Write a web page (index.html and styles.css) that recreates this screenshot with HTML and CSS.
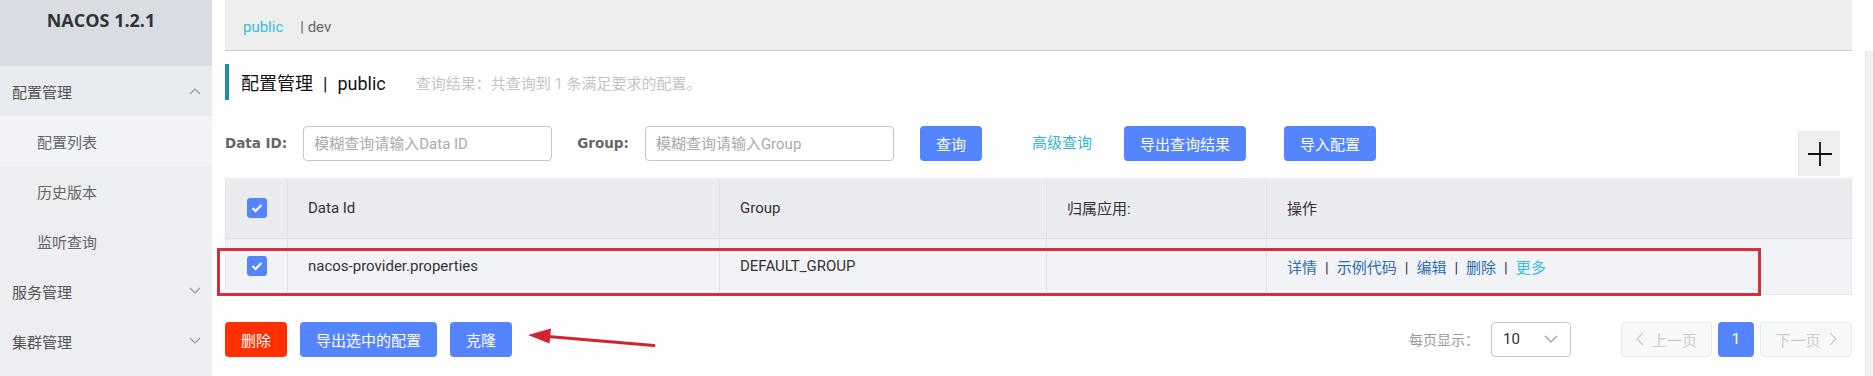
FILE: index.html
```html
<!DOCTYPE html>
<html>
<head>
    <title>Nacos - 配置管理</title>
    <link rel="stylesheet" href="styles.css">
</head>
<body>
    <div class="layout">
        <aside class="sidebar">
            <div class="logo">NACOS 1.2.1</div>
            <ul class="menu">
                <li class="menu-item">
                    <span>配置管理</span>
                    <svg class="chevron" width="12" height="8" viewBox="0 0 12 8"><polyline points="1,7 6,2 11,7" fill="none" stroke="#999" stroke-width="1.2"/></svg>
                </li>
                <li class="sub-item active">配置列表</li>
                <li class="sub-item">历史版本</li>
                <li class="sub-item">监听查询</li>
                <li class="menu-item">
                    <span>服务管理</span>
                    <svg class="chevron" width="12" height="8" viewBox="0 0 12 8"><polyline points="1,1 6,6 11,1" fill="none" stroke="#999" stroke-width="1.2"/></svg>
                </li>
                <li class="menu-item">
                    <span>集群管理</span>
                    <svg class="chevron" width="12" height="8" viewBox="0 0 12 8"><polyline points="1,1 6,6 11,1" fill="none" stroke="#999" stroke-width="1.2"/></svg>
                </li>
            </ul>
        </aside>

        <main class="main">
            <div class="page">
                <div class="ns-bar">
                    <span class="ns ns-active">public</span>
                    <span class="ns">| dev</span>
                </div>

                <div class="title-bar">
                    <span class="title">配置管理<span class="title-sep">|</span>public</span>
                    <span class="query-info">查询结果：共查询到 1 条满足要求的配置。</span>
                </div>

                <div class="search-row">
                    <label class="field-label">Data ID:</label>
                    <input class="field-input" type="text" placeholder="模糊查询请输入Data ID">
                    <label class="field-label group-label">Group:</label>
                    <input class="field-input" type="text" placeholder="模糊查询请输入Group">
                    <button class="btn btn-primary btn-query">查询</button>
                    <span class="link-advanced">高级查询</span>
                    <button class="btn btn-primary btn-export">导出查询结果</button>
                    <button class="btn btn-primary btn-import">导入配置</button>
                    <button class="btn-add">
                        <svg width="26" height="26" viewBox="0 0 26 26"><path d="M13 1v24M1 13h24" stroke="#111" stroke-width="1.8" fill="none"/></svg>
                    </button>
                </div>

                <div class="table-wrap">
                    <table class="config-table">
                        <colgroup>
                            <col style="width:62px">
                            <col style="width:432px">
                            <col style="width:327px">
                            <col style="width:220px">
                            <col>
                        </colgroup>
                        <thead>
                            <tr>
                                <th class="cell-check"><span class="checkbox"><svg width="12" height="10" viewBox="0 0 12 10"><polyline points="1.5,5 4.5,8 10.5,2" fill="none" stroke="#fff" stroke-width="2"/></svg></span></th>
                                <th>Data Id</th>
                                <th>Group</th>
                                <th>归属应用:</th>
                                <th>操作</th>
                            </tr>
                        </thead>
                        <tbody>
                            <tr>
                                <td class="cell-check"><span class="checkbox"><svg width="12" height="10" viewBox="0 0 12 10"><polyline points="1.5,5 4.5,8 10.5,2" fill="none" stroke="#fff" stroke-width="2"/></svg></span></td>
                                <td>nacos-provider.properties</td>
                                <td>DEFAULT_GROUP</td>
                                <td></td>
                                <td class="actions">
                                    <a>详情</a><span class="sep">|</span><a>示例代码</a><span class="sep">|</span><a>编辑</a><span class="sep">|</span><a>删除</a><span class="sep">|</span><a class="more">更多</a>
                                </td>
                            </tr>
                        </tbody>
                    </table>
                    <div class="highlight"></div>
                </div>

                <div class="bottom-bar">
                    <button class="btn btn-danger">删除</button>
                    <button class="btn btn-primary">导出选中的配置</button>
                    <button class="btn btn-primary">克隆</button>
                    <svg class="arrow" width="140" height="28" viewBox="0 0 140 28">
                        <line x1="26" y1="11.5" x2="132" y2="20.5" stroke="#d3232f" stroke-width="3" stroke-linecap="round"/>
                        <polygon points="6,10 29,3.5 27.5,18.5" fill="#d3232f"/>
                    </svg>

                    <div class="pagination">
                        <span class="page-size-label">每页显示：</span>
                        <div class="page-size">
                            <span>10</span>
                            <svg width="14" height="8" viewBox="0 0 14 8"><polyline points="1,1 7,7 13,1" fill="none" stroke="#999" stroke-width="1.2"/></svg>
                        </div>
                        <div class="pager">
                            <span class="pager-btn pager-prev">
                                <svg width="8" height="14" viewBox="0 0 8 14"><polyline points="7,1 1,7 7,13" fill="none" stroke="#ccc" stroke-width="1.4"/></svg>
                                上一页
                            </span>
                            <span class="pager-num">1</span>
                            <span class="pager-btn pager-next">
                                下一页
                                <svg width="8" height="14" viewBox="0 0 8 14"><polyline points="1,1 7,7 1,13" fill="none" stroke="#ccc" stroke-width="1.4"/></svg>
                            </span>
                        </div>
                    </div>
                </div>
            </div>
            <div class="scroll-track"></div>
        </main>
    </div>
</body>
</html>
```

FILE: styles.css
```css
* {
    box-sizing: border-box;
}

body {
    margin: 0;
    font-family: Roboto, "Noto Sans CJK SC", sans-serif;
    font-size: 15px;
    color: #333;
    background: #fff;
}

.layout {
    display: flex;
    height: 100vh;
    overflow: hidden;
}

/* 左侧菜单 */
.sidebar {
    width: 212px;
    flex-shrink: 0;
    background: #eceef1;
}

.logo {
    height: 66px;
    background: #d9dde3;
    font-family: "Open Sans", sans-serif;
    font-weight: 700;
    font-size: 18px;
    color: #333;
    text-align: center;
    padding-top: 8px;
    padding-right: 10px;
}

.menu {
    list-style: none;
    margin: 0;
    padding: 0;
}

.menu-item,
.sub-item {
    height: 50px;
    display: flex;
    align-items: center;
}

.menu-item {
    padding: 0 11px 0 12px;
    justify-content: space-between;
    color: #555;
}

.menu-item:first-child {
    background: #e8ebef;
}

.sub-item {
    padding-left: 37px;
    color: #666;
}

.sub-item.active {
    background: #f1f3f6;
}

/* 主体 */
.main {
    flex: 1;
    display: flex;
    min-width: 0;
}

.page {
    flex: 1;
    padding: 0 13px;
    min-width: 0;
}

.scroll-track {
    width: 8px;
    background: #f1f1f1;
    border-left: 1px solid #e4e4e4;
    margin-top: 51px;
}

.ns-bar {
    height: 51px;
    background: #eee;
    border-bottom: 1px solid #ccc;
    display: flex;
    align-items: center;
    padding: 4px 0 0 18px;
}

.ns {
    color: #666;
    margin-right: 17px;
}

.ns-active {
    color: #33bfd9;
}

.title-bar {
    margin-top: 13px;
    height: 36px;
    border-left: 4px solid #1b8ea3;
    display: flex;
    align-items: center;
    padding-left: 12px;
}

.title {
    font-size: 18px;
    color: #111;
}

.title-sep {
    margin: 0 10px;
}

.query-info {
    margin-left: 30px;
    font-size: 15px;
    color: #c4c4c4;
}

/* 搜索栏 */
.search-row {
    display: flex;
    align-items: flex-start;
    margin-top: 26px;
}

.field-label {
    font-family: "DejaVu Sans", sans-serif;
    font-weight: 700;
    font-size: 13.5px;
    color: #666;
    line-height: 35px;
    margin-right: 16px;
}

.group-label {
    margin-left: 25px;
}

.field-input {
    width: 249px;
    height: 35px;
    border: 1px solid #c4c6cf;
    border-radius: 4px;
    padding: 0 10px;
    font-family: Roboto, "Noto Sans CJK SC", sans-serif;
    font-size: 15px;
    color: #333;
}

.field-input::placeholder {
    color: #aaa;
}

.btn {
    height: 35px;
    padding: 0 16px;
    border: none;
    border-radius: 4px;
    font-family: Roboto, "Noto Sans CJK SC", sans-serif;
    font-size: 15px;
    color: #fff;
    cursor: pointer;
}

.btn-primary {
    background: #5584ff;
}

.btn-danger {
    background: #ff3000;
}

.btn-query {
    margin-left: 26px;
}

.link-advanced {
    margin-left: 50px;
    line-height: 35px;
    color: #33b8d0;
}

.btn-export {
    margin-left: 32px;
}

.btn-import {
    margin-left: 38px;
}

.btn-add {
    margin-left: auto;
    margin-top: 5px;
    margin-right: 12px;
    width: 42px;
    height: 45px;
    background: #efefef;
    border: none;
    border-left: 1px solid #e3e3e3;
    display: flex;
    align-items: center;
    justify-content: center;
    padding: 0;
}

/* 表格 */
.table-wrap {
    position: relative;
    margin-top: 2px;
}

.config-table {
    width: 100%;
    border-collapse: collapse;
    table-layout: fixed;
}

.config-table th,
.config-table td {
    text-align: left;
    font-weight: 400;
    padding: 0 20px;
    border-left: 1px solid #dfe1e6;
    color: #333;
}

.config-table th:first-child,
.config-table td:first-child {
    border-left: 1px solid #e6e7eb;
}

.config-table th:last-child,
.config-table td:last-child {
    border-right: 1px solid #e6e7eb;
}

.config-table th {
    height: 60px;
    background: #ebecf0;
    border-bottom: 1px solid #dfe1e6;
}

.config-table td {
    height: 56px;
    background: #f2f3f7;
    border-bottom: 1px solid #e6e7eb;
}

.config-table .cell-check {
    padding: 0;
    text-align: center;
}

.checkbox {
    display: inline-flex;
    width: 20px;
    height: 20px;
    border-radius: 3px;
    background: #5584ff;
    align-items: center;
    justify-content: center;
    vertical-align: middle;
}

.actions a {
    color: #2f6bb0;
}

.actions .more {
    color: #33c0e0;
}

.actions .sep {
    margin: 0 8px;
    color: #333;
}

.highlight {
    position: absolute;
    left: -8px;
    top: 70px;
    width: 1544px;
    height: 48px;
    border: 3px solid #d42f3b;
    pointer-events: none;
}

/* 底部操作栏 */
.bottom-bar {
    position: relative;
    display: flex;
    align-items: center;
    gap: 13px;
    margin-top: 27px;
}

.arrow {
    position: absolute;
    left: 297px;
    top: 3px;
}

.pagination {
    margin-left: auto;
    display: flex;
    align-items: center;
}

.page-size-label {
    font-size: 14px;
    color: #999;
}

.page-size {
    margin-left: 12px;
    width: 80px;
    height: 35px;
    border: 1px solid #c4c6cf;
    border-radius: 4px;
    display: flex;
    align-items: center;
    justify-content: space-between;
    padding: 0 12px 0 11px;
    color: #333;
}

.pager {
    margin-left: 50px;
    display: flex;
    gap: 6px;
}

.pager-btn {
    width: 91px;
    height: 35px;
    background: #f7f8fa;
    border: 1px solid #e6e7eb;
    border-radius: 4px;
    color: #ccc;
    display: flex;
    align-items: center;
    justify-content: center;
    gap: 8px;
}

.pager-next {
    width: 92px;
}

.pager-num {
    width: 36px;
    height: 35px;
    border-radius: 4px;
    background: #5584ff;
    color: #fff;
    display: flex;
    align-items: center;
    justify-content: center;
}
```
